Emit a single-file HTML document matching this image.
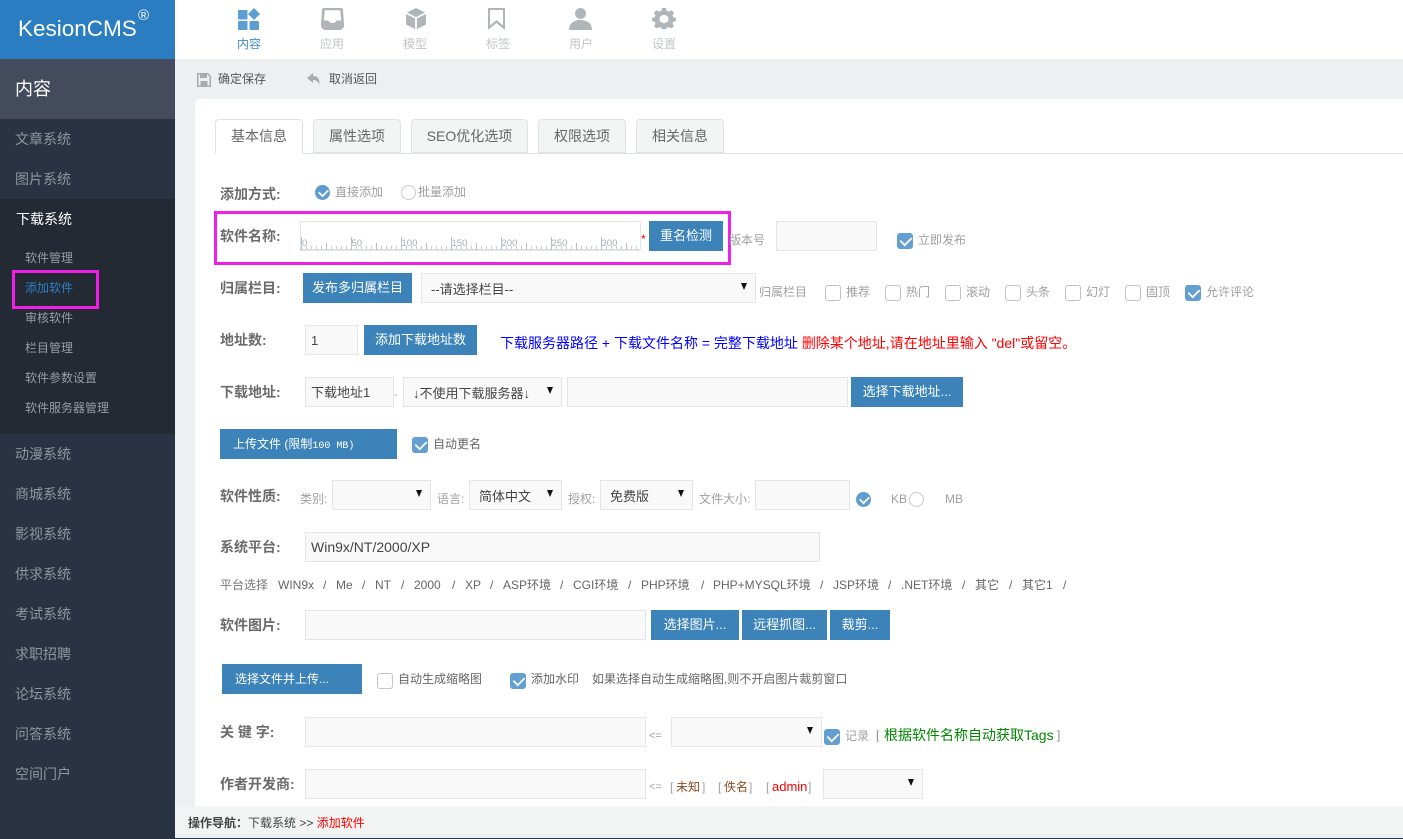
<!DOCTYPE html>
<html lang="zh"><head><meta charset="utf-8"><title>KesionCMS</title>
<style>
*{box-sizing:border-box}
html,body{margin:0;padding:0;width:1403px;height:839px;overflow:hidden;background:#fff}
body{position:relative;font-family:"Liberation Sans","Noto Sans CJK SC",sans-serif;font-size:12px;color:#666}
.a,.t,.i,.b,.s,.tab,.c,.r{position:absolute}
.t{white-space:nowrap;line-height:16px}
.l{font-size:14px;font-weight:bold;color:#6b6b6b}
.g{color:#a0a0a0}
.i,.s{background:#f9f9f9;border:1px solid #e4e6e6;height:30px;color:#444;line-height:29px;padding-left:5px;font-size:13px}
.s:after{content:"";position:absolute;right:8px;top:9px;border-left:3.500px solid transparent;border-right:3.500px solid transparent;border-top:7px solid #111}
.s{padding-left:9px;line-height:31px}
.b{background:#3c83b9;color:#fff;height:30px;line-height:30px;text-align:center;font-size:13px;white-space:nowrap}
.tab{top:119px;height:34px;background:#f3f5f5;border:1px solid #dfe3e3;border-radius:4px 4px 0 0;text-align:center;line-height:33px;font-size:14px;color:#666}
.c{width:16px;height:16px;border-radius:3px;border:1px solid #c4c4c4;background:#fff}
.c.on{background:#639fd3;border-color:#639fd3}
.c.on:after,.r.on:after{content:"";position:absolute;left:4px;top:0;width:6px;height:10px;border:solid #fff;border-width:0 2px 2px 0;transform:rotate(45deg) scale(.9)}
.r{width:15px;height:15px;border-radius:50%;border:1px solid #c8c8c8;background:#fff}
.r.on{background:#5c9ccf;border-color:#5c9ccf}
.r.on:after{left:4px;top:1px;width:5px;height:8px}
.m{left:15px;color:#8f96a0;font-size:14px}
.n{left:25px;color:#9a9da1;font-size:12px}
.nav{color:#c2c5c8;font-size:12px;width:60px;text-align:center;top:36px}
.p{top:577px;color:#666}
</style></head><body>

<!-- top -->
<div class="a" style="left:175px;top:0;width:1228px;height:59px;background:#fff"></div>
<div class="a" style="left:175px;top:59px;width:1228px;height:780px;background:#ecf0f1"></div>

<!-- sidebar -->
<div class="a" style="left:0;top:0;width:175px;height:59px;background:#2a7dc0"></div>
<div class="t" style="left:18px;top:15px;font-size:22.500px;line-height:28px;color:#fff">KesionCMS</div>
<div class="t" style="left:138px;top:8px;font-size:15px;color:#fff">®</div>
<div class="a" style="left:0;top:59px;width:175px;height:60px;background:#434b5c"></div>
<div class="t" style="left:15px;top:78px;font-size:18px;line-height:22px;color:#fff">内容</div>
<div class="a" style="left:0;top:119px;width:175px;height:720px;background:#2a3343"></div>
<div class="a" style="left:0;top:199px;width:175px;height:235px;background:#232a34"></div>
<div class="t m" style="top:131px">文章系统</div>
<div class="t m" style="top:171px">图片系统</div>
<div class="t" style="left:16px;top:211px;font-size:14px;color:#fff">下载系统</div>
<div class="t n" style="top:250px">软件管理</div>
<div class="t n" style="top:280px;color:#2a80c4">添加软件</div>
<div class="t n" style="top:310px">审核软件</div>
<div class="t n" style="top:340px">栏目管理</div>
<div class="t n" style="top:370px">软件参数设置</div>
<div class="t n" style="top:400px">软件服务器管理</div>
<div class="t m" style="top:446px">动漫系统</div>
<div class="t m" style="top:486px">商城系统</div>
<div class="t m" style="top:526px">影视系统</div>
<div class="t m" style="top:566px">供求系统</div>
<div class="t m" style="top:606px">考试系统</div>
<div class="t m" style="top:646px">求职招聘</div>
<div class="t m" style="top:686px">论坛系统</div>
<div class="t m" style="top:726px">问答系统</div>
<div class="t m" style="top:766px">空间门户</div>
<div class="a" style="left:12px;top:270px;width:87px;height:39px;border:3px solid #f01fe8"></div>

<!-- nav icons -->
<svg class="a" style="left:237px;top:8px" width="24" height="22" viewBox="0 0 24 22"><g fill="#5e9fd3"><rect x="1" y="2" width="9.500" height="9.500" rx="1"/><rect x="1" y="13" width="9.500" height="9" rx="1"/><rect x="12.500" y="13" width="9.500" height="9" rx="1"/><path d="M17 0l6 6-6 6-6-6z"/></g></svg>
<svg class="a" style="left:320px;top:8px" width="25" height="22" viewBox="0 0 25 22"><path d="M4 0h17a2 2 0 0 1 2 2l1 14a5 5 0 0 1-5 6H6a5 5 0 0 1-5-6L2 2a2 2 0 0 1 2-2zm.8 2.200L3.800 12.500H8.500c1 1.800 2 2.500 4 2.500s3-.7 4-2.500h4.700L20.200 2.200z" fill="#b0b5b9" fill-rule="evenodd"/></svg>
<svg class="a" style="left:405px;top:8px" width="22" height="22" viewBox="0 0 22 22"><g fill="#b0b5b9"><path d="M11 0l9 4.500-9 4.500-9-4.500z"/><path d="M1 6l9 4.500V21l-9-4.500z"/><path d="M21 6l-9 4.500V21l9-4.500z"/></g></svg>
<svg class="a" style="left:488px;top:8px" width="18" height="22" viewBox="0 0 18 22"><path d="M0 0h17v22l-8.500-7L0 22zm2 2v15.500l6.500-5.500 6.500 5.500V2z" fill="#b0b5b9" fill-rule="evenodd"/></svg>
<svg class="a" style="left:569px;top:8px" width="24" height="22" viewBox="0 0 24 22"><g fill="#b0b5b9"><circle cx="11.500" cy="5.500" r="5.500"/><path d="M0 22c0-6 4-10 11.500-10S23 16 23 22z"/></g></svg>
<svg class="a" style="left:652px;top:8px" width="24" height="22" viewBox="0 0 24 22"><path d="M10 0h4l.6 3 2.200 1 2.700-1.600 2.600 2.800L20.500 8l.8 2 2.700.7v3.600l-2.700.7-.8 2 1.600 2.800-2.600 2.400-2.700-1.600-2.200 1-.6 1.400h-4l-.6-1.400-2.200-1-2.700 1.600-2.600-2.400L3.500 17l-.8-2-2.700-.7v-3.600l2.700-.7.800-2-1.600-2.800 2.600-2.800 2.700 1.600 2.200-1zM12 7.500a4.500 4.500 0 1 0 0 9 4.500 4.500 0 0 0 0-9z" fill="#b0b5b9" fill-rule="evenodd" transform="scale(1 .92)"/></svg>
<div class="t nav" style="left:219px;color:#3f8ccb">内容</div>
<div class="t nav" style="left:302px">应用</div>
<div class="t nav" style="left:385px">模型</div>
<div class="t nav" style="left:468px">标签</div>
<div class="t nav" style="left:551px">用户</div>
<div class="t nav" style="left:634px">设置</div>

<!-- toolbar -->
<svg class="a" style="left:197px;top:73px" width="14" height="14" viewBox="0 0 14 14"><path d="M0 0h11l3 3v11H0zm1.500 1.500v11h11V3.600L10.400 1.500H10V5H3V1.500zM3.500 8v4.500h7V8z" fill="#a8acaf" fill-rule="evenodd"/></svg>
<svg class="a" style="left:307px;top:72px" width="14" height="14" viewBox="0 0 14 14"><path d="M6 1L0 6l6 5V8c3 0 5 1 6 5 1.500-5-1-9-6-9z" fill="#a8acaf"/></svg>
<div class="t" style="left:218px;top:71px;color:#555">确定保存</div>
<div class="t" style="left:329px;top:71px;color:#555">取消返回</div>

<!-- card -->
<div class="a" style="left:195px;top:99px;width:1208px;height:708px;background:#fff;border-radius:5px 0 0 0"></div>
<div class="a" style="left:215px;top:153px;width:1188px;height:1px;background:#dfe3e3"></div>
<div class="tab" style="left:215px;width:88px;background:#fff;border-bottom-color:#fff;height:35px">基本信息</div>
<div class="tab" style="left:313px;width:88px">属性选项</div>
<div class="tab" style="left:411px;width:117px">SEO优化选项</div>
<div class="tab" style="left:538px;width:88px">权限选项</div>
<div class="tab" style="left:636px;width:88px">相关信息</div>

<!-- row add method -->
<div class="t l" style="left:220px;top:186px">添加方式:</div>
<div class="r on" style="left:315px;top:185px"></div>
<div class="t g" style="left:335px;top:184px">直接添加</div>
<div class="r" style="left:401px;top:185px"></div>
<div class="t g" style="left:418px;top:184px">批量添加</div>

<!-- name -->
<div class="a" style="left:214px;top:211px;width:517px;height:54px;border:3px solid #f01fe8"></div>
<div class="t l" style="left:220px;top:228px">软件名称:</div>
<div class="a" style="left:300px;top:221px;width:341px;height:30px;border:1px solid #e2e5e5;background:#fff"></div>
<svg class="a" style="left:301px;top:236px" width="339" height="14" viewBox="0 0 339 14"><defs><pattern id="p" width="5" height="14" patternUnits="userSpaceOnUse"><rect x="0" y="10" width="1" height="4" fill="#c8cbd8"/></pattern></defs><rect width="339" height="14" fill="url(#p)"/><rect y="13" width="339" height="1" fill="#d8dbe0"/><g fill="#b9bccb"><rect x="25" y="7" width="1" height="7"/><rect x="75" y="7" width="1" height="7"/><rect x="125" y="7" width="1" height="7"/><rect x="175" y="7" width="1" height="7"/><rect x="225" y="7" width="1" height="7"/><rect x="275" y="7" width="1" height="7"/><rect x="325" y="7" width="1" height="7"/><rect x="0" y="1" width="1" height="13"/><rect x="50" y="1" width="1" height="13"/><rect x="100" y="1" width="1" height="13"/><rect x="150" y="1" width="1" height="13"/><rect x="200" y="1" width="1" height="13"/><rect x="250" y="1" width="1" height="13"/><rect x="300" y="1" width="1" height="13"/></g><g font-family="Liberation Sans" font-size="9.500" fill="#a9adb4"><text x="1" y="10">0</text><text x="50.500" y="10">50</text><text x="100.500" y="10">100</text><text x="150.500" y="10">150</text><text x="200.500" y="10">200</text><text x="250.500" y="10">250</text><text x="300.500" y="10">300</text></g></svg>
<div class="t" style="left:641px;top:231px;color:#f00;font-size:12px">*</div>
<div class="b" style="left:649px;top:221px;width:74px">重名检测</div>
<div class="t g" style="left:729px;top:232px">版本号</div>
<div class="i" style="left:776px;top:221px;width:101px"></div>
<div class="c on" style="left:897px;top:233px"></div>
<div class="t g" style="left:918px;top:232px">立即发布</div>

<!-- category -->
<div class="t l" style="left:220px;top:280px">归属栏目:</div>
<div class="b" style="left:303px;top:273px;width:109px">发布多归属栏目</div>
<div class="s" style="left:421px;top:273px;width:335px">--请选择栏目--</div>
<div class="t g" style="left:759px;top:284px">归属栏目</div>
<div class="c" style="left:825px;top:285px"></div><div class="t g" style="left:846px;top:284px">推荐</div>
<div class="c" style="left:885px;top:285px"></div><div class="t g" style="left:906px;top:284px">热门</div>
<div class="c" style="left:945px;top:285px"></div><div class="t g" style="left:966px;top:284px">滚动</div>
<div class="c" style="left:1005px;top:285px"></div><div class="t g" style="left:1026px;top:284px">头条</div>
<div class="c" style="left:1065px;top:285px"></div><div class="t g" style="left:1086px;top:284px">幻灯</div>
<div class="c" style="left:1125px;top:285px"></div><div class="t g" style="left:1146px;top:284px">固顶</div>
<div class="c on" style="left:1185px;top:285px"></div><div class="t g" style="left:1206px;top:284px">允许评论</div>

<!-- addr count -->
<div class="t l" style="left:220px;top:332px">地址数:</div>
<div class="i" style="left:305px;top:325px;width:53px;font-size:13px">1</div>
<div class="b" style="left:364px;top:325px;width:113px">添加下载地址数</div>
<div class="t" style="left:500px;top:335px;color:#00f;font-size:14px">下载服务器路径 + 下载文件名称 = 完整下载地址 <span style="color:#f00">删除某个地址,请在地址里输入 "del"或留空。</span></div>

<!-- addr -->
<div class="t l" style="left:220px;top:384px">下载地址:</div>
<div class="i" style="left:305px;top:377px;width:89px">下载地址1</div>
<div class="t g" style="left:394px;top:388px;font-size:10px">-</div>
<div class="s" style="left:403px;top:377px;width:159px">↓不使用下载服务器↓</div>
<div class="i" style="left:567px;top:377px;width:281px"></div>
<div class="b" style="left:851px;top:377px;width:112px">选择下载地址...</div>

<div class="b" style="left:220px;top:429px;width:177px;text-align:left;padding-left:13px;font-size:12px">上传文件 (限制<span style="font-family:'Liberation Mono',monospace;font-size:10px">100 MB)</span></div>
<div class="c on" style="left:412px;top:437px"></div>
<div class="t" style="left:433px;top:436px">自动更名</div>

<!-- nature -->
<div class="t l" style="left:220px;top:488px">软件性质:</div>
<div class="t g" style="left:300px;top:491px">类别:</div>
<div class="s" style="left:332px;top:480px;width:99px"></div>
<div class="t g" style="left:437px;top:491px">语言:</div>
<div class="s" style="left:469px;top:480px;width:93px">简体中文</div>
<div class="t g" style="left:568px;top:491px">授权:</div>
<div class="s" style="left:600px;top:480px;width:93px">免费版</div>
<div class="t g" style="left:699px;top:491px">文件大小:</div>
<div class="i" style="left:755px;top:480px;width:95px"></div>
<div class="r on" style="left:856px;top:492px"></div>
<div class="t g" style="left:891px;top:491px">KB</div>
<div class="r" style="left:909px;top:492px"></div>
<div class="t g" style="left:945px;top:491px">MB</div>

<!-- platform -->
<div class="t l" style="left:220px;top:539px">系统平台:</div>
<div class="i" style="left:305px;top:532px;width:515px;font-size:14px">Win9x/NT/2000/XP</div>
<div class="t" style="left:220px;top:577px;color:#777">平台选择</div>
<div class="t p" style="left:278px">WIN9x</div><div class="t p" style="left:323px">/</div>
<div class="t p" style="left:336px">Me</div><div class="t p" style="left:362px">/</div>
<div class="t p" style="left:375px">NT</div><div class="t p" style="left:401px">/</div>
<div class="t p" style="left:414px">2000</div><div class="t p" style="left:452px">/</div>
<div class="t p" style="left:465px">XP</div><div class="t p" style="left:490px">/</div>
<div class="t p" style="left:503px">ASP环境</div><div class="t p" style="left:560px">/</div>
<div class="t p" style="left:573px">CGI环境</div><div class="t p" style="left:628px">/</div>
<div class="t p" style="left:641px">PHP环境</div><div class="t p" style="left:701px">/</div>
<div class="t p" style="left:713px">PHP+MYSQL环境</div><div class="t p" style="left:820px">/</div>
<div class="t p" style="left:833px">JSP环境</div><div class="t p" style="left:888px">/</div>
<div class="t p" style="left:901px">.NET环境</div><div class="t p" style="left:962px">/</div>
<div class="t p" style="left:975px">其它</div><div class="t p" style="left:1009px">/</div>
<div class="t p" style="left:1022px">其它1</div><div class="t p" style="left:1063px">/</div>

<!-- image -->
<div class="t l" style="left:220px;top:617px">软件图片:</div>
<div class="i" style="left:305px;top:610px;width:341px"></div>
<div class="b" style="left:651px;top:610px;width:88px">选择图片...</div>
<div class="b" style="left:742px;top:610px;width:85px">远程抓图...</div>
<div class="b" style="left:830px;top:610px;width:60px">裁剪...</div>

<div class="b" style="left:222px;top:664px;width:140px;font-size:12px;text-align:left;padding-left:13px">选择文件并上传...</div>
<div class="c" style="left:377px;top:673px"></div>
<div class="t" style="left:398px;top:671px">自动生成缩略图</div>
<div class="c on" style="left:510px;top:673px"></div>
<div class="t" style="left:531px;top:671px">添加水印</div>
<div class="t" style="left:592px;top:671px">如果选择自动生成缩略图,则不开启图片裁剪窗口</div>

<!-- keywords -->
<div class="t l" style="left:220px;top:724px">关 键 字:</div>
<div class="i" style="left:305px;top:717px;width:341px"></div>
<div class="t g" style="left:649px;top:728px;font-size:11px">&lt;=</div>
<div class="s" style="left:671px;top:717px;width:151px"></div>
<div class="c on" style="left:824px;top:729px"></div>
<div class="t g" style="left:845px;top:728px">记录</div>
<div class="t" style="left:876px;top:727px;color:#888">[</div>
<div class="t" style="left:884px;top:727px;color:#080;font-size:14px">根据软件名称自动获取Tags</div>
<div class="t" style="left:1057px;top:727px;color:#888">]</div>

<div class="t l" style="left:220px;top:776px">作者开发商:</div>
<div class="i" style="left:305px;top:769px;width:341px"></div>
<div class="t g" style="left:649px;top:779px;font-size:11px">&lt;=</div>
<div class="t g" style="left:670px;top:779px">[</div><div class="t" style="left:676px;top:779px;color:#8a4b1c">未知</div><div class="t g" style="left:702px;top:779px">]</div>
<div class="t g" style="left:718px;top:779px">[</div><div class="t" style="left:724px;top:779px;color:#8a4b1c">佚名</div><div class="t g" style="left:749px;top:779px">]</div>
<div class="t g" style="left:766px;top:779px">[</div><div class="t" style="left:772px;top:779px;color:#f00;font-size:13px">admin</div><div class="t g" style="left:808px;top:779px">]</div>
<div class="s" style="left:823px;top:769px;width:100px"></div>

<!-- footer -->
<div class="a" style="left:175px;top:806px;width:1228px;height:28px;background:#f2f3f3"></div>
<div class="a" style="left:0;top:838px;width:1403px;height:1px;background:#2a3343"></div>
<div class="t" style="left:188px;top:815px;color:#444"><b>操作导航：</b>下载系统 &gt;&gt; <span style="color:#f00">添加软件</span></div>
</body></html>
